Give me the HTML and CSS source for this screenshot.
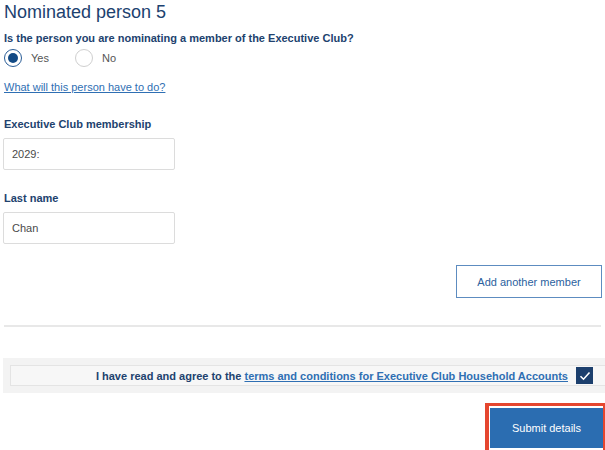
FILE: index.html
```html
<!DOCTYPE html>
<html>
<head>
<meta charset="utf-8">
<link rel="stylesheet" href="styles.css">
</head>
<body>
<div class="page">
  <h1 class="title">Nominated person 5</h1>
  <p class="question">Is the person you are nominating a member of the Executive Club?</p>
  <div class="radios">
    <label class="radio"><span class="dot checked"></span>Yes</label>
    <label class="radio"><span class="dot"></span>No</label>
  </div>
  <a class="help" href="#">What will this person have to do?</a>
  <div class="field first">
    <div class="label">Executive Club membership</div>
    <div class="input">2029:</div>
  </div>
  <div class="field">
    <div class="label">Last name</div>
    <div class="input">Chan</div>
  </div>
  <div class="actions">
    <button class="add">Add another member</button>
  </div>
  <hr class="divider">
  <div class="agree">
    <div class="agree-box">
      <span class="agree-text">I have read and agree to the <a href="#">terms and conditions for Executive Club Household Accounts</a></span>
      <span class="check"><svg width="12" height="10" viewBox="0 0 12 10"><path d="M1.5 5.2 L4.5 8.2 L10.5 1.5" fill="none" stroke="#fff" stroke-width="1.6"/></svg></span>
    </div>
  </div>
  <div class="submit-row">
    <div class="highlight"><button class="submit">Submit details</button></div>
  </div>
</div>
</body>
</html>
```

FILE: styles.css
```css
html, body { margin: 0; padding: 0; background: #fff; }
body { font-family: "Liberation Sans", Arial, sans-serif; overflow: hidden; }
.page { width: 605px; height: 450px; box-sizing: border-box; padding-left: 4px; }
.title { margin: 0; padding-top: 1px; font-size: 18px; line-height: 22px; font-weight: normal; color: #1c416f; }
.question { margin: 8px 0 0; font-size: 11px; line-height: 14px; font-weight: bold; color: #21426e; }
.radios { display: flex; gap: 0; margin-top: 2px; height: 22px; align-items: center; }
.radio { display: flex; align-items: center; font-size: 11px; color: #555; width: 71px; }
.dot { width: 16px; height: 16px; border: 1px solid #cfcfcf; border-radius: 50%; box-sizing: content-box; margin-right: 9px; position: relative; background: #fff; }
.dot.checked { border-color: #2a5d97; }
.dot.checked::after { content: ""; position: absolute; left: 3px; top: 3px; width: 10px; height: 10px; border-radius: 50%; background: #124a85; }
.help { display: block; margin-top: 11px; font-size: 11px; line-height: 14px; color: #2f6fb3; text-decoration: underline; width: max-content; }
.field.first { margin-top: 23px; }
.field { margin-top: 21px; }
.label { font-size: 11px; line-height: 14px; font-weight: bold; color: #21426e; }
.input { margin-top: 7px; width: 172px; height: 32px; box-sizing: border-box; border: 1px solid #dcdcdc; border-radius: 2px; padding: 0 8px; font-size: 11px; line-height: 30px; color: #4a4a4a; margin-left: -1px; }
.actions { display: flex; justify-content: flex-end; margin-top: 21px; padding-right: 3px; }
.add { width: 146px; height: 33px; background: #fff; border: 1px solid #5d8cc0; color: #2b5f9e; font-family: inherit; font-size: 11px; padding: 0; }
.divider { margin: 27px 4px 0 0; border: 0; border-top: 2px solid #e8e8e8; height: 0; }
.agree { margin: 31px 0 0 -1px; background: #f3f3f3; height: 35px; display: flex; align-items: center; padding-left: 7px; }
.agree-box { flex: 1; display: flex; align-items: center; justify-content: flex-end; height: 19px; border: 1px solid #e4e4e4; border-right: 0; background: #f7f7f7; padding-right: 12px; gap: 8px; }
.agree-text { font-size: 11px; font-weight: bold; color: #21426e; }
.agree-text a { color: #2f6fb3; text-decoration: underline; }
.check { width: 17px; height: 17px; background: #1c3f6d; display: flex; align-items: center; justify-content: center; }
.submit-row { display: flex; justify-content: flex-end; margin-top: 10px; }
.highlight { border: 3px solid #e5462f; border-left-width: 4px; border-right-width: 2px; border-bottom: 0; height: 50px; box-sizing: border-box; padding: 1px 0 0 1px; }
.submit { width: 113px; height: 41px; background: #2b6db1; border: 0; border-top: 1px solid #fff; color: #fff; font-family: inherit; font-size: 11px; padding: 0; }
```
